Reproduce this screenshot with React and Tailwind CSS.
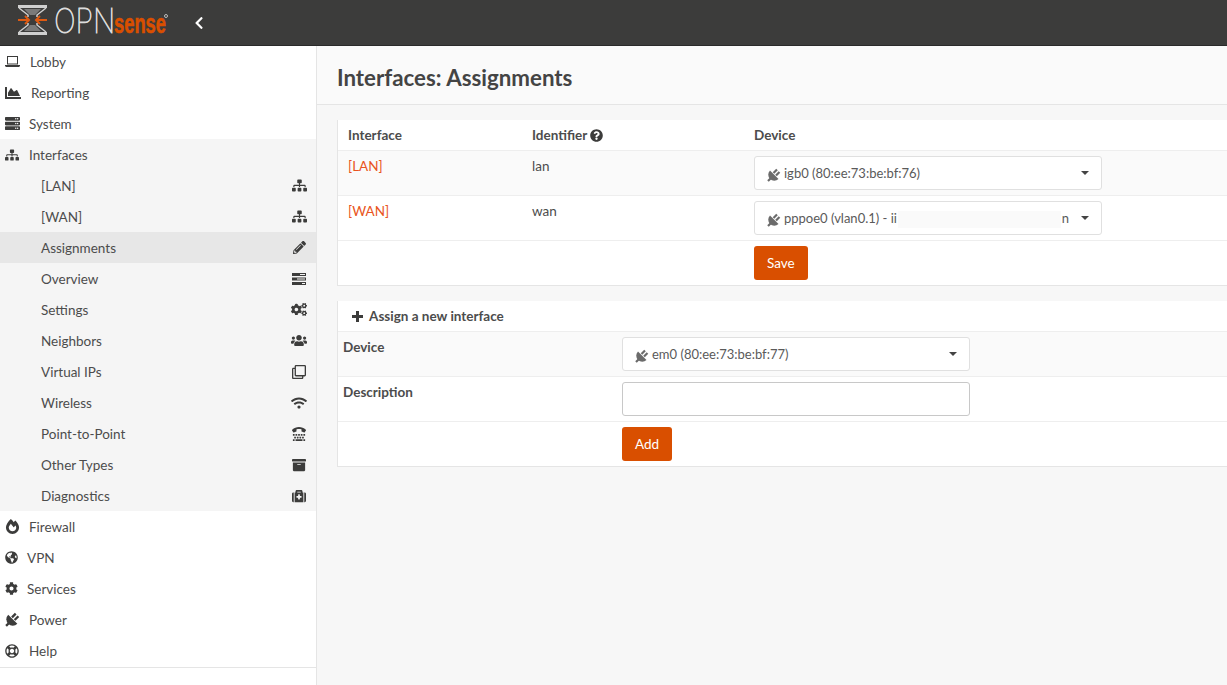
import React from 'react';
import {
  FaArchive,
  FaChartArea,
  FaChevronLeft,
  FaCog,
  FaCogs,
  FaFireAlt,
  FaGlobeAmericas,
  FaMedkit,
  FaPencilAlt,
  FaQuestionCircle,
  FaRegClone,
  FaRegLifeRing,
  FaServer,
  FaSitemap,
  FaTty,
  FaUsers,
  FaWifi,
} from 'react-icons/fa';

const TasksIcon = () => (
  <svg width="14" height="12" viewBox="0 0 14 12" fill="currentColor">
    <path d="M0 0h14v3H0zM0 4.500h14v3H0zM0 9h14v3H0z" />
    <path fill="#f5f5f5" d="M8 1h5v1H8zM5 5.500h8v1H5zM10 10h3v1h-3z" />
  </svg>
);

const LaptopIcon = () => (
  <svg width="15" height="11" viewBox="0 0 15 11" fill="currentColor">
    <path fillRule="evenodd" d="M2 0h11v8.500H2zM3 1v6.500h9V1z" />
    <path d="M0 9h15v1l-1 1H1l-1-1z" />
  </svg>
);

// diagonal plug, the package only has an upright one
const PlugIcon = ({ size = 14, className = '' }) => (
  <svg width={size} height={size} viewBox="0 0 14 14" fill="currentColor" className={className}>
    <path d="M3 2.500 11.500 11A6 6 0 0 1 3 2.500z" />
    <path stroke="currentColor" strokeWidth="2.200" d="M6.500 5 10 1.500M9 7.500 12.500 4M3.500 10.500 1 13" />
  </svg>
);

const PlusIcon = () => (
  <svg width="11" height="11" viewBox="0 0 11 11" fill="currentColor" className="text-[#3c3c3b]">
    <path d="M4 0h3v4h4v3H7v4H4V7H0V4h4z" />
  </svg>
);

const topBefore = [
  { label: 'Lobby', icon: <LaptopIcon />, gap: 'ml-[9px]' },
  { label: 'Reporting', icon: <FaChartArea size={16} />, gap: 'ml-[10px]' },
  { label: 'System', icon: <FaServer size={15} />, gap: 'ml-[8px]' },
];

const topAfter = [
  { label: 'Firewall', icon: <FaFireAlt size={15} />, gap: 'ml-[8px]' },
  { label: 'VPN', icon: <FaGlobeAmericas size={13} />, gap: 'ml-[6px]' },
  { label: 'Services', icon: <FaCog size={13} />, gap: 'ml-[6px]' },
  { label: 'Power', icon: <PlugIcon size={15} />, gap: 'ml-[8px]' },
  { label: 'Help', icon: <FaRegLifeRing size={14} />, gap: 'ml-[8px]' },
];

const subItems = [
  { label: '[LAN]', icon: <FaSitemap size={15} /> },
  { label: '[WAN]', icon: <FaSitemap size={15} /> },
  { label: 'Assignments', icon: <FaPencilAlt size={13} />, active: true },
  { label: 'Overview', icon: <TasksIcon /> },
  { label: 'Settings', icon: <FaCogs size={17} /> },
  { label: 'Neighbors', icon: <FaUsers size={17} /> },
  { label: 'Virtual IPs', icon: <FaRegClone size={14} /> },
  { label: 'Wireless', icon: <FaWifi size={16} /> },
  { label: 'Point-to-Point', icon: <FaTty size={14} /> },
  { label: 'Other Types', icon: <FaArchive size={14} /> },
  { label: 'Diagnostics', icon: <FaMedkit size={14} /> },
];

const Logo = () => (
  <svg width="156" height="45" viewBox="0 0 156 45" className="ml-[18px]">
    <path fill="#cfcfcf" d="M0 5h29v3H0zM0 32h29v3H0z" />
    <path fill="#7a7a7a" d="M6 9h17l-6 6h-5zM12 25h5l6 6H6z" />
    <path fill="none" stroke="#cfcfcf" strokeWidth="1.500" d="M1 8l9 7v2M28 8l-9 7v2M10 23v2l-9 7M19 23v2l9 7" />
    <path fill="none" stroke="#dd5a12" strokeWidth="2" d="M0 20h11M29 20H18M7 16l4 4-4 4M22 16l-4 4 4 4" />
    <text
      transform="translate(36 33) scale(0.85 1)"
      fontFamily="Inter, sans-serif"
      fontWeight="100"
      fontSize="34"
      fill="#dcdcdc"
      stroke="#dcdcdc"
      strokeWidth="0.800"
    >
      OPN
    </text>
    <text
      transform="translate(96 33) scale(0.68 1)"
      fontFamily="'Liberation Sans', sans-serif"
      fontWeight="700"
      fontSize="27"
      fill="#d94f00"
      stroke="#d94f00"
      strokeWidth="0.600"
    >
      sense
    </text>
    <circle cx="148" cy="16" r="1.500" fill="none" stroke="#bbb" />
  </svg>
);

const SideRow = ({ item }) => (
  <div className="flex h-[31px] items-center pl-[5px] text-[#4c4c4c]">
    <span className="flex w-4 shrink-0 justify-start text-[#3c3c3b]">{item.icon}</span>
    <span className={`pt-[2px] ${item.gap}`}>{item.label}</span>
  </div>
);

const SubRow = ({ item }) => (
  <div
    className={`flex h-[31px] items-center justify-between pl-[41px] pr-[9px] text-[#4c4c4c] ${
      item.active ? 'bg-[#e7e7e7]' : ''
    }`}
  >
    <span className="pt-[2px]">{item.label}</span>
    <span className="flex w-4 justify-center text-[#3c3c3b]">{item.icon}</span>
  </div>
);

const Select = ({ children }) => (
  <div className="flex h-[34px] w-[348px] items-center rounded-[3px] border border-[#e0e0e0] bg-white pl-[12px] pr-[12px] text-[13px] text-[#5a5a5a]">
    <PlugIcon size={14} className="mt-[3px] mr-[3px] shrink-0 text-[#6b6b6b]" />
    <div className="flex min-w-0 flex-1 items-center pt-[2px]">{children}</div>
    <span className="ml-[12px] h-0 w-0 border-x-4 border-t-4 border-x-transparent border-t-[#444]" />
  </div>
);

const OrangeButton = ({ children }) => (
  <button className="h-[34px] rounded-[3px] bg-[#d94f00] px-[13px] text-white">{children}</button>
);

export default function App() {
  return (
    <div className="flex h-[685px] w-[1227px] flex-col overflow-hidden bg-white font-['Lato',sans-serif] text-[13.500px] text-[#4c4c4c]">
      <header className="flex h-[46px] shrink-0 items-center border-b border-[#2a2a2a] bg-[#3c3c3b]">
        <Logo />
        <FaChevronLeft size={14} className="ml-[20px] -translate-x-[2px] text-white" />
      </header>

      <div className="flex min-h-0 flex-1">
        <aside className="w-[317px] shrink-0 border-r border-[#e5e5e5] bg-white">
          {topBefore.map((item) => (
            <SideRow key={item.label} item={item} />
          ))}
          <div className="bg-[#f5f5f5]">
            <SideRow item={{ label: 'Interfaces', icon: <FaSitemap size={14} />, gap: 'ml-[8px]' }} />
            {subItems.map((item) => (
              <SubRow key={item.label} item={item} />
            ))}
          </div>
          {topAfter.map((item) => (
            <SideRow key={item.label} item={item} />
          ))}
          <div className="border-b border-[#e5e5e5] pt-px" />
        </aside>

        <main className="min-w-0 flex-1 bg-[#f7f7f7]">
          <div className="flex h-[59px] items-center border-b border-[#e5e5e5] bg-[#fafafa] pl-[20px] pt-[5px]">
            <h1 className="text-[22.300px] font-bold text-[#444]">Interfaces: Assignments</h1>
          </div>

          <div className="pl-[20px] pt-[15px]">
            <section className="border-b border-l border-[#e5e5e5] bg-white">
              <div className="flex h-[31px] items-center border-b border-[#eee] pl-[10px] font-bold">
                <span className="w-[184px]">Interface</span>
                <span className="flex w-[222px] items-center gap-[3px]">
                  Identifier <FaQuestionCircle size={13} className="text-[#3c3c3b]" />
                </span>
                <span>Device</span>
              </div>
              <div className="flex h-[45px] border-b border-[#eee] bg-[#fafafa] pl-[10px]">
                <span className="w-[184px] pt-[5px] text-[#e95420]">[LAN]</span>
                <span className="w-[222px] pt-[5px]">lan</span>
                <div className="pt-[5px]">
                  <Select>igb0 (80:ee:73:be:bf:76)</Select>
                </div>
              </div>
              <div className="flex h-[45px] border-b border-[#eee] pl-[10px]">
                <span className="w-[184px] pt-[5px] text-[#e95420]">[WAN]</span>
                <span className="w-[222px] pt-[5px]">wan</span>
                <div className="pt-[5px]">
                  <Select>
                    <span className="whitespace-nowrap">pppoe0 (vlan0.1) - ii</span>
                    <span className="mx-[1px] h-[17px] flex-1 bg-[#fafafa]" />
                    <span>n</span>
                  </Select>
                </div>
              </div>
              <div className="flex h-[44px] pl-[416px] pt-[5px]">
                <OrangeButton>Save</OrangeButton>
              </div>
            </section>

            <section className="mt-[15px] border-b border-l border-[#e5e5e5] bg-white">
              <div className="flex h-[31px] items-center gap-[6px] border-b border-[#eee] pl-[14px] font-bold">
                <PlusIcon />
                Assign a new interface
              </div>
              <div className="flex h-[45px] border-b border-[#eee] bg-[#fafafa] pl-[5px]">
                <span className="w-[279px] pt-[5px] font-bold">Device</span>
                <div className="pt-[5px]">
                  <Select>em0 (80:ee:73:be:bf:77)</Select>
                </div>
              </div>
              <div className="flex h-[45px] border-b border-[#eee] pl-[5px]">
                <span className="w-[279px] pt-[5px] font-bold">Description</span>
                <div className="pt-[5px]">
                  <input className="block h-[34px] w-[348px] rounded-[3px] border border-[#c8c8c8] bg-white" />
                </div>
              </div>
              <div className="flex h-[44px] pl-[284px] pt-[5px]">
                <OrangeButton>Add</OrangeButton>
              </div>
            </section>
          </div>
        </main>
      </div>
    </div>
  );
}
